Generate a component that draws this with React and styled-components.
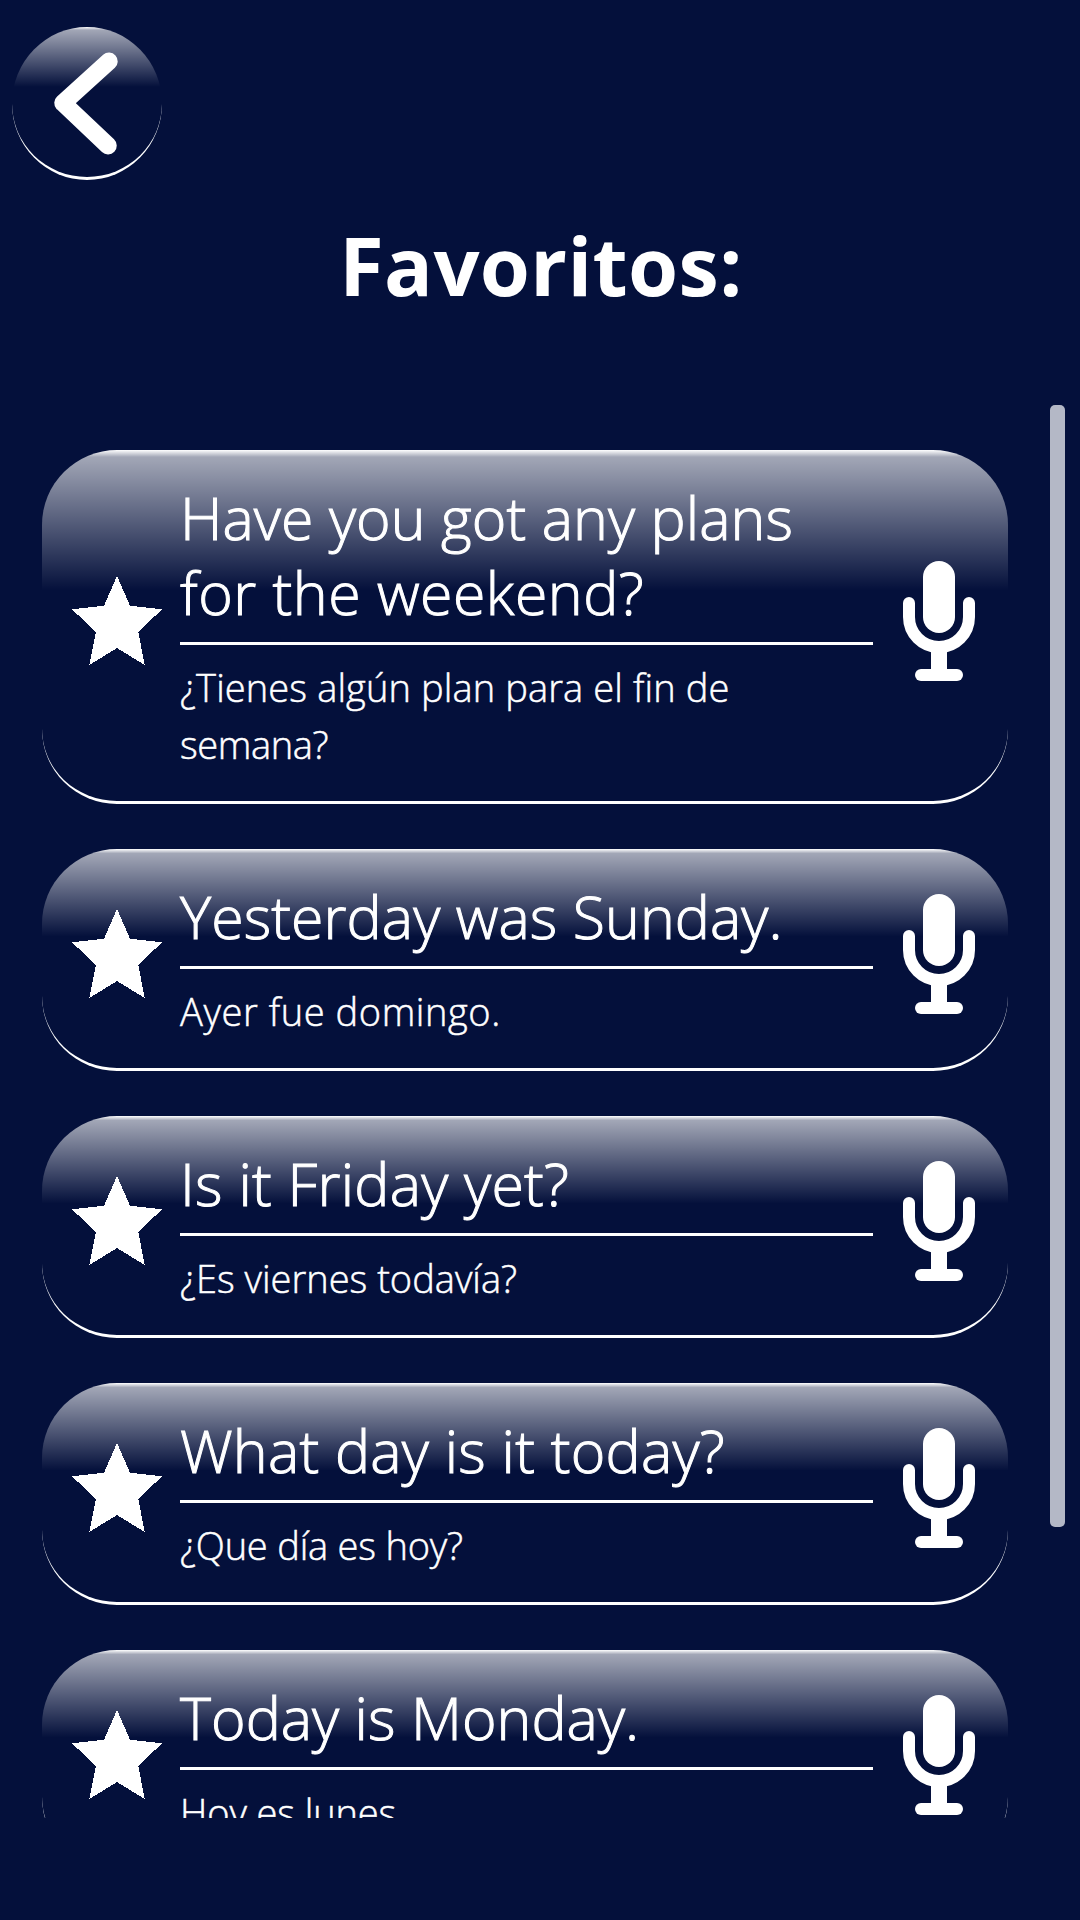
import styled, { createGlobalStyle } from "styled-components";

const phrases = [
  {
    text: [
      { line: "Have you got any plans", spacing: 0.08 },
      { line: "for the weekend?", spacing: 0.5 },
    ],
    translation: [
      { line: "¿Tienes algún plan para el fin de", spacing: 0.11 },
      { line: "semana?", spacing: -0.4 },
    ],
  },
  {
    text: [{ line: "Yesterday was Sunday.", spacing: 0.08 }],
    translation: [{ line: "Ayer fue domingo.", spacing: 0.58 }],
  },
  {
    text: [{ line: "Is it Friday yet?", spacing: 0.25 }],
    translation: [{ line: "¿Es viernes todavía?", spacing: 0 }],
  },
  {
    text: [{ line: "What day is it today?", spacing: 0.24 }],
    translation: [{ line: "¿Que día es hoy?", spacing: -0.2 }],
  },
  {
    text: [{ line: "Today is Monday.", spacing: 0.05 }],
    translation: [{ line: "Hoy es lunes.", spacing: -0.1 }],
  },
];

function BackIcon() {
  return (
    <svg width="150" height="150" viewBox="0 0 150 150" fill="none">
      <path
        d="M97 34.3 51 76 96 118.7"
        stroke="#fff"
        strokeWidth="17.5"
        strokeLinecap="round"
        strokeLinejoin="round"
      />
    </svg>
  );
}

function StarIcon() {
  return (
    <svg width="90" height="90" viewBox="0 0 90 90" shapeRendering="crispEdges">
      <polygon
        fill="#fff"
        points="45,0 58,29.7 90,33.3 66.3,56 72.7,89 45,72 17.3,89 24,56 0,33.3 32,29.7"
      />
    </svg>
  );
}

function MicIcon() {
  return (
    <svg width="72" height="120" viewBox="0 0 72 120" fill="#fff">
      <rect x="20" y="0" width="32" height="72" rx="16" />
      <path
        d="M6 42v14a30 30 0 0 0 60 0V42"
        fill="none"
        stroke="#fff"
        strokeWidth="12"
        strokeLinecap="round"
      />
      <rect x="28" y="86" width="16" height="26" />
      <rect x="12" y="108" width="48" height="12" rx="6" />
    </svg>
  );
}

function Lines({ items }) {
  return items.map((item) => (
    <Line key={item.line} $spacing={item.spacing}>
      {item.line}
    </Line>
  ));
}

function PhraseCard({ phrase }) {
  return (
    <Card>
      <IconButton aria-label="Quitar de favoritos">
        <StarIcon />
      </IconButton>
      <Texts>
        <Phrase>
          <Lines items={phrase.text} />
        </Phrase>
        <Translation>
          <Lines items={phrase.translation} />
        </Translation>
      </Texts>
      <IconButton aria-label="Hablar">
        <MicIcon />
      </IconButton>
    </Card>
  );
}

function App() {
  return (
    <Page>
      <GlobalStyle />
      <BackButton aria-label="Volver">
        <BackIcon />
      </BackButton>
      <Title>Favoritos:</Title>
      <Favorites>
        <CardList>
          {phrases.map((phrase) => (
            <PhraseCard key={phrase.text[0].line} phrase={phrase} />
          ))}
        </CardList>
        <ScrollThumb />
      </Favorites>
    </Page>
  );
}

export default App;

const GlobalStyle = createGlobalStyle`
  * {
    box-sizing: border-box;
  }

  body {
    margin: 0;
    background: #04103b;
    color: #fff;
    font-family: "Open Sans", "Noto Sans", sans-serif;
  }

  h1,
  p {
    margin: 0;
  }
`;

const Page = styled.main`
  display: flex;
  flex-direction: column;
  width: 1080px;
  height: 1920px;
  overflow: hidden;
`;

const BackButton = styled.button`
  flex: none;
  display: flex;
  width: 150px;
  height: 153px;
  margin: 27px 0 0 12px;
  padding: 0;
  border: none;
  border-bottom: 3px solid #fff;
  border-radius: 50%;
  background: linear-gradient(
    #fff,
    rgba(255, 255, 255, 0.63) 2%,
    transparent 40%
  );
`;

const Title = styled.h1`
  height: 110px;
  margin: 30px 0 85px;
  padding-left: 2px;
  font-size: 81px;
  font-weight: 700;
  line-height: 110px;
  letter-spacing: 0.36px;
  text-align: center;
`;

const Favorites = styled.section`
  display: flex;
  justify-content: space-between;
  align-items: flex-start;
  height: 1413px;
  padding: 0 15px 0 42px;
  overflow: hidden;
`;

const CardList = styled.div`
  display: flex;
  flex-direction: column;
  gap: 45px;
  width: 966px;
  padding-top: 45px;
`;

const Card = styled.article`
  display: flex;
  justify-content: space-between;
  align-items: center;
  padding: 30px 33px 29px 30px;
  border-bottom: 3px solid #fff;
  border-radius: 75px;
  background: linear-gradient(
    #fff,
    rgba(255, 255, 255, 0.63) 2%,
    transparent 40%
  );
`;

const IconButton = styled.button`
  display: flex;
  padding: 0 0 11px;
  border: none;
  background: none;
`;

const Texts = styled.div`
  width: 693px;
  margin-right: 12px;
`;

const Phrase = styled.p`
  padding-bottom: 12px;
  border-bottom: 3px solid #fff;
  font-size: 59px;
  font-weight: 300;
  line-height: 75px;
  -webkit-text-stroke: 1px #fff;
`;

const Translation = styled.p`
  padding-top: 14px;
  margin-bottom: -1px;
  font-size: 38px;
  font-weight: 300;
  line-height: 57px;
  -webkit-text-stroke: 0.5px #fff;
`;

const Line = styled.span`
  display: block;
  letter-spacing: ${(props) => props.$spacing}px;
  white-space: nowrap;
`;

const ScrollThumb = styled.div`
  width: 15px;
  height: 1122px;
  border-radius: 5px;
  background: #b4b8c6;
`;
